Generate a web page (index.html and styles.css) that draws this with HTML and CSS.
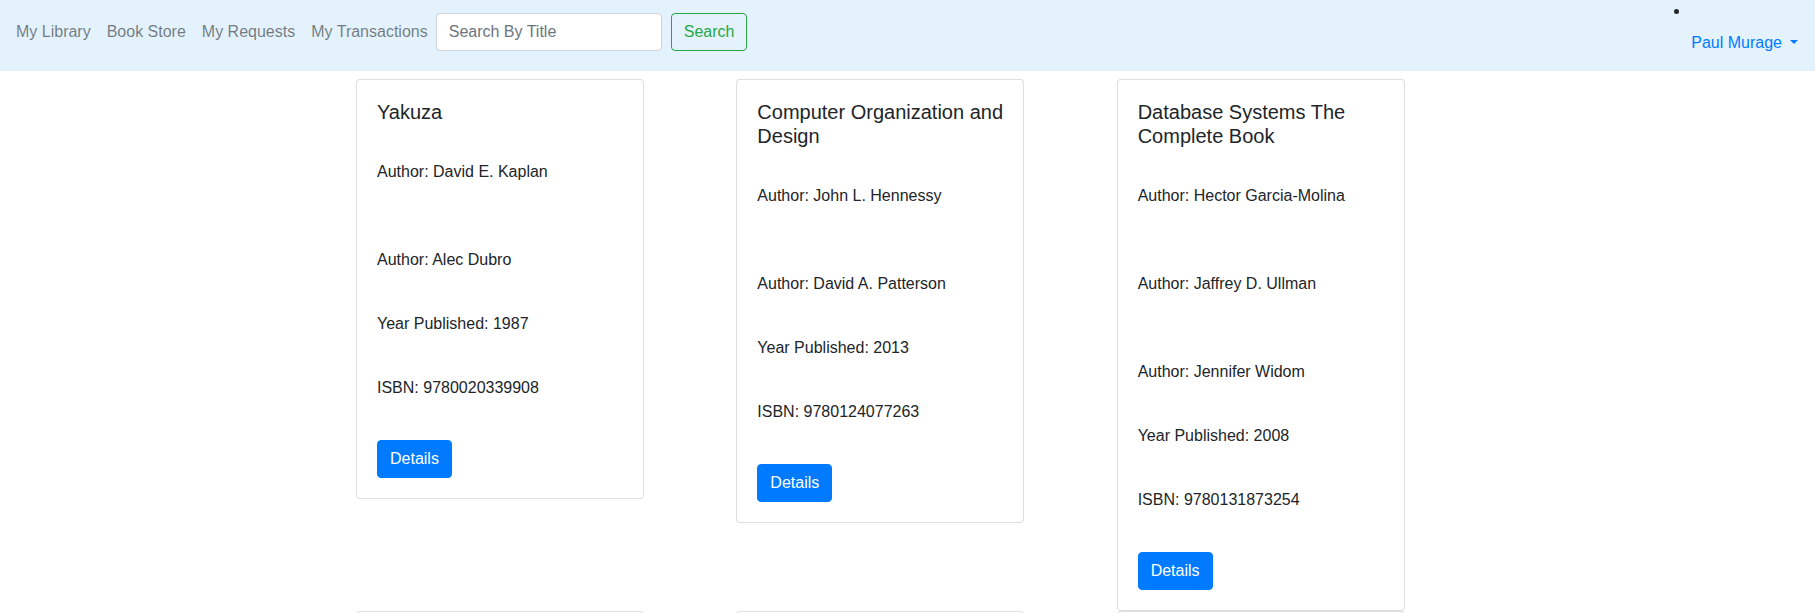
FILE: index.html
```html
<!DOCTYPE html>
<html lang="en">
<head>
<meta charset="utf-8">
<title>Book Store</title>
<link rel="stylesheet" href="styles.css">
</head>
<body>
<nav class="navbar">
  <div class="nav-left">
    <a class="nav-link" href="#">My Library</a>
    <a class="nav-link" href="#">Book Store</a>
    <a class="nav-link" href="#">My Requests</a>
    <a class="nav-link" href="#">My Transactions</a>
    <form class="search-form">
      <input class="search-input" type="search" placeholder="Search By Title">
      <button class="btn-outline-success" type="button">Search</button>
    </form>
  </div>
  <div class="nav-right">
    <span class="bullet"></span>
    <a class="user-link" href="#">Paul Murage<span class="caret"></span></a>
  </div>
</nav>

<main class="book-grid">
  <div class="cell">
    <div class="card">
      <h5 class="card-title">Yakuza</h5>
      <p class="card-text gap-lg">Author: David E. Kaplan</p>
      <p class="card-text">Author: Alec Dubro</p>
      <p class="card-text">Year Published: 1987</p>
      <p class="card-text">ISBN: 9780020339908</p>
      <a class="btn-primary" href="#">Details</a>
    </div>
  </div>
  <div class="cell">
    <div class="card">
      <h5 class="card-title">Computer Organization and Design</h5>
      <p class="card-text gap-lg">Author: John L. Hennessy</p>
      <p class="card-text">Author: David A. Patterson</p>
      <p class="card-text">Year Published: 2013</p>
      <p class="card-text">ISBN: 9780124077263</p>
      <a class="btn-primary" href="#">Details</a>
    </div>
  </div>
  <div class="cell">
    <div class="card">
      <h5 class="card-title">Database Systems The Complete Book</h5>
      <p class="card-text gap-lg">Author: Hector Garcia-Molina</p>
      <p class="card-text gap-lg">Author: Jaffrey D. Ullman</p>
      <p class="card-text">Author: Jennifer Widom</p>
      <p class="card-text">Year Published: 2008</p>
      <p class="card-text">ISBN: 9780131873254</p>
      <a class="btn-primary" href="#">Details</a>
    </div>
  </div>
  <div class="cell">
    <div class="card">
      <h5 class="card-title">&nbsp;</h5>
      <p class="card-text">&nbsp;</p>
    </div>
  </div>
  <div class="cell">
    <div class="card">
      <h5 class="card-title">&nbsp;</h5>
      <p class="card-text">&nbsp;</p>
    </div>
  </div>
  <div class="cell">
    <div class="card">
      <h5 class="card-title">&nbsp;</h5>
      <p class="card-text">&nbsp;</p>
    </div>
  </div>
</main>
</body>
</html>
```

FILE: styles.css
```css
* { box-sizing: border-box; }

html, body {
  margin: 0;
  padding: 0;
  background: #fff;
}

body {
  font-family: "Liberation Sans", Arial, Helvetica, sans-serif;
  font-size: 16px;
  line-height: 1.5;
  color: #212529;
}

a { text-decoration: none; }

/* ---------- navbar ---------- */
.navbar {
  display: flex;
  justify-content: space-between;
  align-items: flex-start;
  background-color: #e3f2fd;
  padding: 8px 9px 8px 8px;
}

.nav-left {
  display: flex;
  align-items: center;
  margin-top: 4px;
}

.nav-link {
  display: block;
  padding: 8px;
  color: rgba(0, 0, 0, 0.5);
}

.search-form {
  display: flex;
  align-items: center;
  margin: 0;
}

.search-input {
  width: 226px;
  height: 38px;
  padding: 6px 12px;
  font-family: inherit;
  font-size: 16px;
  line-height: 1.5;
  color: #495057;
  background: #fff;
  border: 1px solid #ced4da;
  border-radius: 4px;
  outline: none;
}

.search-input::placeholder { color: #6c757d; opacity: 1; }

.btn-outline-success {
  margin-left: 9px;
  height: 38px;
  padding: 6px 12px;
  font-family: inherit;
  font-size: 16px;
  line-height: 1.5;
  color: #28a745;
  background: transparent;
  border: 1px solid #28a745;
  border-radius: 4px;
}

.nav-right {
  display: flex;
  align-items: flex-start;
}

.bullet {
  width: 5px;
  height: 5px;
  margin-top: 1px;
  margin-right: 4px;
  border-radius: 50%;
  background: #212529;
}

.user-link {
  display: block;
  margin-top: 15px;
  padding: 8px;
  color: #007bff;
}

.caret {
  display: inline-block;
  margin-left: 8px;
  vertical-align: 0.255em;
  border-top: 4.8px solid #007bff;
  border-left: 4.8px solid transparent;
  border-right: 4.8px solid transparent;
}

/* ---------- cards ---------- */
.book-grid {
  width: 1141px;
  margin: 0 auto;
  padding-top: 8px;
  display: grid;
  grid-template-columns: repeat(3, 1fr);
  align-items: start;
  row-gap: 0;
}

.cell {
  padding-left: 19px;
}

.card {
  width: 288px;
  padding: 20px;
  background: #fff;
  border: 1px solid rgba(0, 0, 0, 0.125);
  border-radius: 4px;
}

.card-title {
  margin: 0 0 36px;
  font-size: 20px;
  font-weight: 500;
  line-height: 1.2;
}

.card-text {
  margin: 0 0 40px;
}

.card-text.gap-lg {
  margin-bottom: 64px;
}

.btn-primary {
  display: inline-block;
  padding: 6px 12px;
  color: #fff;
  background: #007bff;
  border: 1px solid #007bff;
  border-radius: 4px;
  line-height: 1.5;
}
```
